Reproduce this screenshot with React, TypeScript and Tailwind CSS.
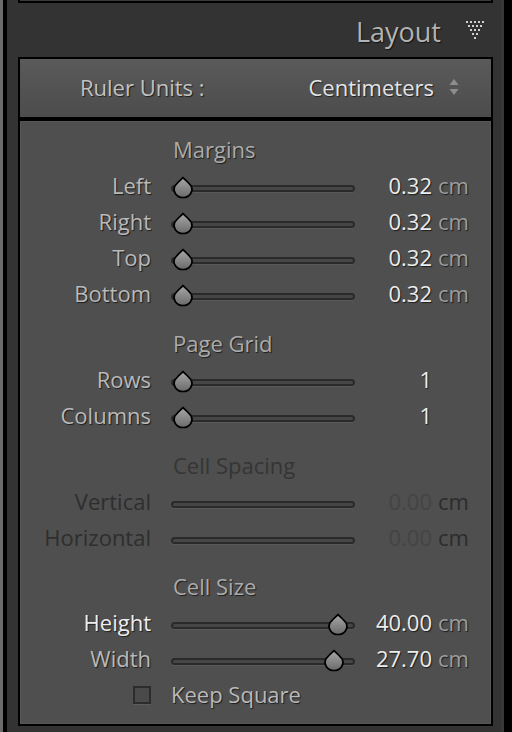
import React from "react"

const shadow = "[text-shadow:1px_1px_1px_rgba(0,0,0,0.65)]"

function Thumb({ left }: { left: number }) {
  return (
    <svg
      className="absolute top-[-1px]"
      style={{ left }}
      width="22"
      height="23"
      viewBox="0 0 22 23"
    >
      <defs>
        <linearGradient id="thumbFill" x1="0" y1="0" x2="0" y2="1">
          <stop offset="0" stopColor="#a8a8a8" />
          <stop offset="1" stopColor="#6a6a6a" />
        </linearGradient>
      </defs>
      <path
        d="M11 1.5 C9.4 3.6 4.6 7.2 2.6 10.6 C0.6 15 4 21.5 11 21.5 C18 21.5 21.4 15 19.4 10.6 C17.4 7.2 12.6 3.6 11 1.5 Z"
        fill="url(#thumbFill)"
        stroke="#000"
        strokeWidth="1.7"
        strokeLinejoin="round"
      />
    </svg>
  )
}

function Slider({ thumb }: { thumb?: number }) {
  return (
    <div className="relative flex items-center h-[22px] w-[184px] mt-[4px]">
      <div className="w-full h-[7px] rounded-full border-2 border-[#2a2a2a] bg-[#464646] shadow-[0_1px_0_rgba(255,255,255,0.06)]" />
      {thumb !== undefined && <Thumb left={thumb} />}
    </div>
  )
}

interface RowProps {
  label: string
  value: string
  unit?: string
  thumb?: number
  disabled?: boolean
  active?: boolean
}

function Row({ label, value, unit, thumb, disabled, active }: RowProps) {
  const labelColor = disabled ? "text-[#2e2e2e]" : active ? `text-[#ededed] ${shadow}` : `text-[#b9b9b9] ${shadow}`
  const valueColor = disabled ? "text-[#444444]" : `text-[#ececec] ${shadow}`
  const unitColor = disabled ? "text-[#2c2c2c]" : `text-[#9c9c9c] ${shadow}`
  return (
    <div className="flex items-center h-[36px]">
      <div className={`w-[131px] text-right pb-[2px] ${labelColor}`}>{label}</div>
      <div className="ml-[20px]">
        <Slider thumb={thumb} />
      </div>
      <div className={`w-[77px] text-right pb-[2px] ${valueColor}`}>{value}</div>
      {unit && <div className={`ml-[6px] pb-[2px] ${unitColor}`}>{unit}</div>}
    </div>
  )
}

function SectionTitle({ children, disabled }: { children: string; disabled?: boolean }) {
  return (
    <div className="flex items-center h-[36px] pl-[153px] pb-[2px]">
      <span className={disabled ? "text-[#353535]" : `text-[#ababab] ${shadow}`}>{children}</span>
    </div>
  )
}

function DotTriangle() {
  const rows = [5, 4, 3, 2, 1]
  return (
    <svg width="20" height="20" viewBox="0 0 20 20">
      {rows.map((count, r) =>
        Array.from({ length: count }).map((_, i) => (
          <rect
            key={`${r}-${i}`}
            x={1 + r * 2 + i * 4}
            y={1 + r * 4}
            width="2"
            height="2"
            fill="#d0d0d0"
          />
        ))
      )}
    </svg>
  )
}

export default function App() {
  return (
    <div className="w-[512px] h-[732px] flex bg-black overflow-hidden font-['Open_Sans',sans-serif] text-[22px] leading-none">
      <div className="w-[3px] bg-[#6b6b6b]" />
      <div className="w-[4px] bg-black" />
      <div className="w-[494px] bg-[#333333] flex flex-col pl-[11px] pr-[8px]">
        <div className="h-[3px] border-x-2 border-b-2 border-black bg-[#3a3a3a]" />

        <div className="h-[54px] flex items-center justify-end pr-[8px] gap-[24px]">
          <span className={`text-[27px] text-[#b3b3b3] ${shadow} mt-[2px]`}>Layout</span>
          <DotTriangle />
        </div>

        <div className="h-[62px] border-2 border-black bg-gradient-to-b from-[#5a5a5a] to-[#4c4c4c] flex items-center pb-[2px]">
          <span className={`ml-[60px] text-[#c2c2c2] ${shadow}`}>Ruler Units :</span>
          <span className={`ml-auto text-[#e4e4e4] ${shadow}`}>Centimeters</span>
          <svg className="ml-[15px] mr-[32px]" width="10" height="18" viewBox="0 0 10 18">
            <path d="M5 1 L9.5 7 L0.5 7 Z" fill="#8c8c8c" />
            <path d="M0.5 11 L9.5 11 L5 17 Z" fill="#8c8c8c" />
          </svg>
        </div>

        <div className="h-[607px] border-2 border-black bg-[#4f4f4f] shadow-[inset_0_0_0_1px_#575757] pt-[11px] flex flex-col">
          <SectionTitle>Margins</SectionTitle>
          <Row label="Left" value="0.32" unit="cm" thumb={1} />
          <Row label="Right" value="0.32" unit="cm" thumb={1} />
          <Row label="Top" value="0.32" unit="cm" thumb={1} />
          <Row label="Bottom" value="0.32" unit="cm" thumb={1} />

          <div className="h-[14px]" />
          <SectionTitle>Page Grid</SectionTitle>
          <Row label="Rows" value="1" thumb={1} />
          <Row label="Columns" value="1" thumb={1} />

          <div className="h-[14px]" />
          <SectionTitle disabled>Cell Spacing</SectionTitle>
          <Row label="Vertical" value="0.00" unit="cm" disabled />
          <Row label="Horizontal" value="0.00" unit="cm" disabled />

          <div className="h-[13px]" />
          <SectionTitle>Cell Size</SectionTitle>
          <Row label="Height" value="40.00" unit="cm" thumb={156} active />
          <Row label="Width" value="27.70" unit="cm" thumb={152} />

          <div className="flex items-center h-[36px]">
            <div className="w-[131px] flex justify-end">
              <div className="w-[18px] h-[18px] border-2 border-[#2c2c2c] bg-[#4a4a4a] shadow-[0_1px_0_rgba(255,255,255,0.08)]" />
            </div>
            <span className={`ml-[20px] pb-[2px] text-[#b9b9b9] ${shadow}`}>Keep Square</span>
          </div>
        </div>
      </div>
      <div className="w-[3px] bg-[#383838]" />
      <div className="flex-1 bg-black" />
    </div>
  )
}
